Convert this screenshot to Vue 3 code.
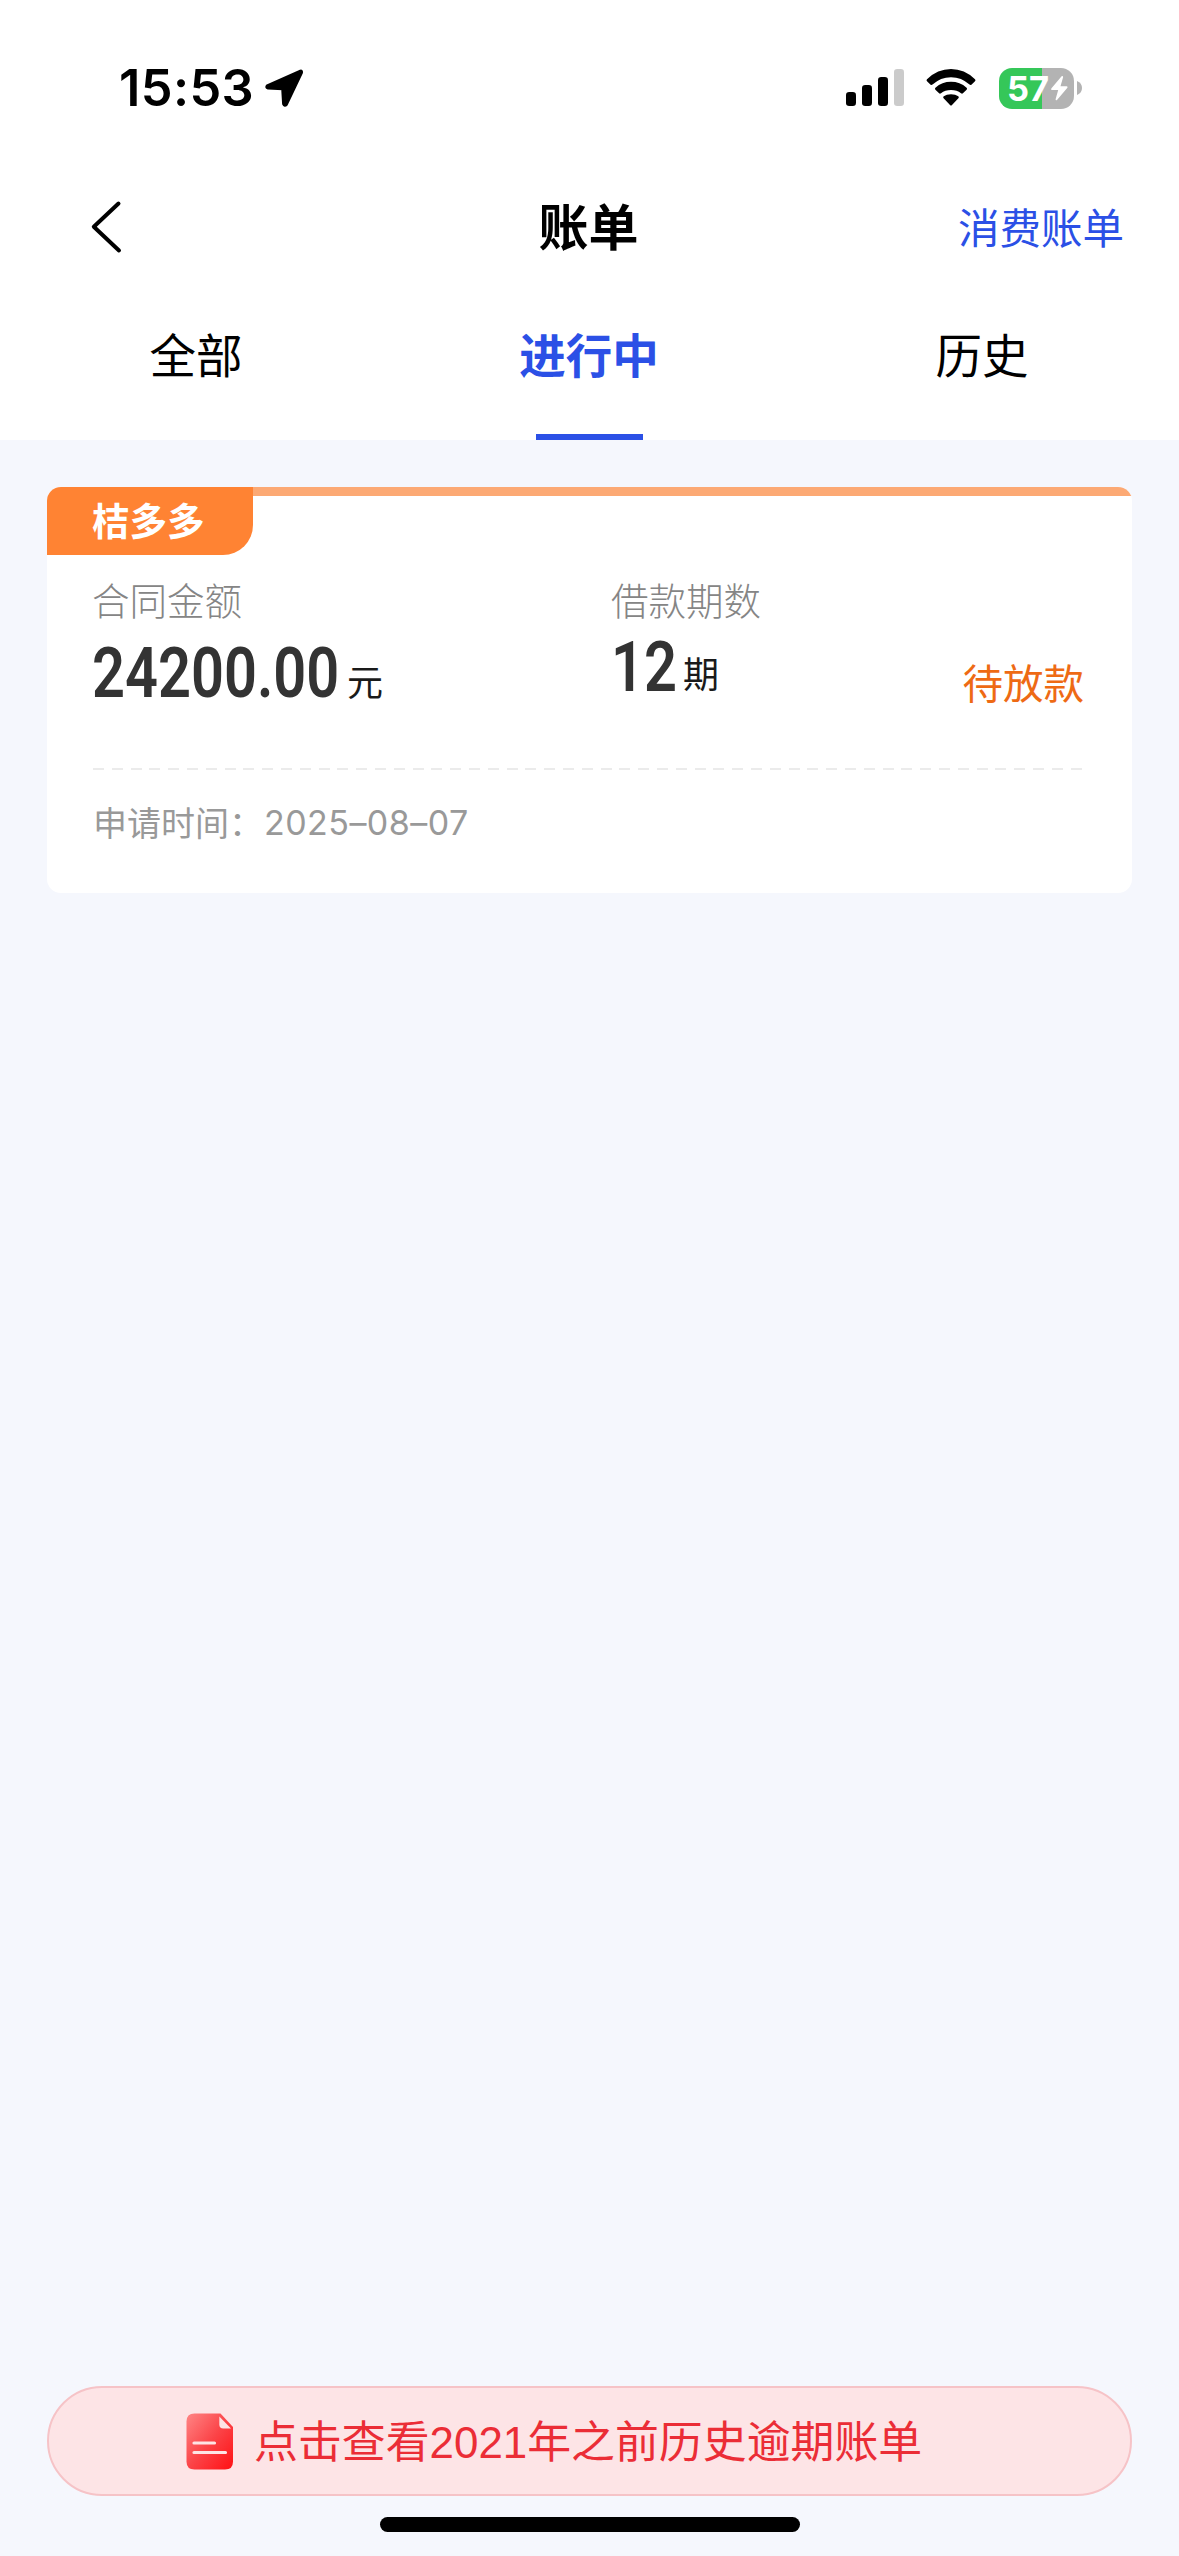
<script setup>
const tabs = [
  { label: '全部', active: false },
  { label: '进行中', active: true },
  { label: '历史', active: false },
]
const bill = {
  tag: '桔多多',
  amount: '24200.00',
  periods: '12',
  status: '待放款',
  date: '2025–08–07',
}
</script>

<template>
  <div class="page">
    <header class="top">
      <div class="status-bar">
        <span class="clock">15:53</span>
        <svg class="location" width="40" height="40" viewBox="0 0 40 40">
          <path d="M36.5 3.2 L3.3 18 Q2.2 19.6 4 20 L18.8 20.6 L19.7 36 Q20.6 38.2 22.3 36.4 L37.4 4.6 Q37.6 3 36.5 3.2Z" fill="#000" stroke="#000" stroke-width="3.2" stroke-linejoin="round" />
        </svg>
        <svg class="signal" width="58" height="38" viewBox="0 0 58 38">
          <rect x="0" y="23" width="10" height="14" rx="3.2" />
          <rect x="16" y="16" width="10" height="21" rx="3.2" />
          <rect x="32" y="8" width="10" height="29" rx="3.2" />
          <rect x="48" y="0" width="10" height="37" rx="3.2" fill="#cbcbcb" />
        </svg>
        <svg class="wifi" width="50" height="38" viewBox="0 0 50 38">
          <path d="M1 10.2 Q11.5 0 25 0 Q38.500 0 49 10.2 Q50 11.2 49 12.200 L45.400 15.700 Q44.500 16.500 43.500 15.600 Q35.500 8.200 25 8.200 Q14.500 8.200 6.500 15.600 Q5.500 16.500 4.600 15.700 L1 12.200 Q0 11.200 1 10.200Z" />
          <path d="M9.400 18.700 Q16 12.800 25 12.800 Q34 12.800 40.600 18.700 Q41.600 19.700 40.600 20.700 L36.900 24.300 Q36 25.100 35 24.200 Q31 20.900 25 20.900 Q19 20.900 15 24.200 Q14 25.100 13.100 24.300 L9.400 20.700 Q8.400 19.700 9.400 18.700Z" />
          <path d="M17.700 27.300 Q20.500 25.200 25 25.200 Q29.500 25.200 32.300 27.300 Q33.400 28.300 32.400 29.300 L26 35.900 Q25 36.900 24 35.900 L17.600 29.300 Q16.600 28.300 17.700 27.300Z" />
        </svg>
        <div class="battery">
          <div class="battery-body">
            <span class="battery-text">57</span>
            <svg width="19" height="27" viewBox="0 0 19 27">
              <path d="M11.600 1.200 L1.300 13.400 Q.5 14.900 2.100 15 H8.200 L5.600 24.200 Q5.500 25.800 7 25 L17.400 12.700 Q18.100 11.400 16.600 11.200 H10.500 L13.100 2.200 Q13.100 .3 11.600 1.200Z" fill="#fff" />
            </svg>
          </div>
          <svg class="nub" width="5" height="14" viewBox="0 0 5 14"><path d="M0 0 Q5 2 5 7 Q5 12 0 14Z" fill="#b3b3b3" /></svg>
        </div>
      </div>

      <nav class="nav">
        <svg class="back" width="32" height="54" viewBox="0 0 32 54">
          <path d="M28.500 3.500 L3.800 26.700 L29 50.500" fill="none" stroke="#000" stroke-width="4" stroke-linecap="round" stroke-linejoin="round" />
        </svg>
        <h1 class="title">账单</h1>
        <a class="link">消费账单</a>
      </nav>

      <div class="tabs">
        <div v-for="tab in tabs" :key="tab.label" class="tab" :class="{ active: tab.active }">
          <span>{{ tab.label }}</span>
        </div>
      </div>
    </header>

    <section class="card">
      <div class="card-head">
        <div class="tag">{{ bill.tag }}</div>
        <div class="stripe"></div>
      </div>
      <div class="info">
        <div class="amount-col">
          <div class="label">合同金额</div>
          <div class="value">
            <span class="number wide"><b>{{ bill.amount }}</b></span>
            <span class="unit">元</span>
          </div>
        </div>
        <div class="period-col">
          <div class="label">借款期数</div>
          <div class="value">
            <span class="number"><b>{{ bill.periods }}</b></span>
            <span class="unit">期</span>
          </div>
        </div>
        <div class="state">{{ bill.status }}</div>
      </div>
      <div class="divider"></div>
      <div class="applied"><span class="applied-label">申请时间：</span><span class="date">{{ bill.date }}</span></div>
    </section>

    <footer class="bottom">
      <div class="history">
        <svg width="48" height="57" viewBox="0 0 48 57">
          <defs>
            <linearGradient id="doc" x1="0" y1="0" x2="1" y2="1">
              <stop offset="0" stop-color="#ff8585" />
              <stop offset=".5" stop-color="#fb4448" />
              <stop offset="1" stop-color="#ff1014" />
            </linearGradient>
          </defs>
          <path d="M8.500 .5 H34.500 L47 14 V48.500 Q47 56.500 39 56.500 H8.500 Q.5 56.500 .5 48.500 V8.500 Q.5 .5 8.500 .5Z" fill="url(#doc)" />
          <path d="M33.300 3.500 L45 15.500 H37.300 Q33.300 15.500 33.300 11.500Z" fill="#fde4e5" />
          <path d="M8 30 H28.500 M8 39.500 H39.500" stroke="#fde4e5" stroke-width="3.200" stroke-linecap="round" />
        </svg>
        <span class="history-text">点击查看2021年之前历史逾期账单</span>
      </div>
      <div class="home"></div>
    </footer>
  </div>
</template>

<style>
body {
  margin: 0;
  background: #f5f7fd;
}
</style>

<style scoped>
.page {
  box-sizing: border-box;
  width: 1179px;
  height: 2556px;
  display: flex;
  flex-direction: column;
  background: #f5f7fd;
  font-family: "Noto Sans CJK SC", sans-serif;
  color: #000;
  overflow: hidden;
}
.top {
  background: #fff;
  height: 440px;
}
.status-bar {
  height: 176px;
  display: flex;
  align-items: center;
  padding-left: 119px;
}
.clock {
  width: 145px;
  font: 600 50.500px/60px Inter, sans-serif;
  letter-spacing: 0.4px;
}
.signal {
  margin-left: 542px;
}
.wifi {
  margin-left: 22px;
}
.battery {
  display: flex;
  align-items: center;
  gap: 3px;
  margin-left: 23px;
}
.battery-body {
  box-sizing: border-box;
  width: 75px;
  height: 41px;
  border-radius: 13px;
  background: linear-gradient(to right, #35c759 43px, #b3b3b3 43px);
  display: flex;
  align-items: center;
  padding-left: 8px;
}
.battery-text {
  width: 43px;
  font: 700 34.500px/41px Inter, sans-serif;
  color: #fff;
}
.nav {
  height: 96px;
  display: grid;
  grid-template-columns: 1fr 200px 1fr;
  align-items: center;
}
.back {
  margin: 5px 0 0 90px;
}
.title {
  margin: 0 2px 0 0;
  font-size: 50px;
  line-height: 60px;
  font-weight: 700;
  text-align: center;
}
.link {
  justify-self: end;
  margin: 3px 55px 0 0;
  font-size: 41.5px;
  line-height: 50px;
  color: #2b50e6;
}
.tabs {
  display: flex;
  height: 168px;
}
.tab {
  flex: 1;
  display: flex;
  flex-direction: column;
  justify-content: space-between;
  align-items: center;
  padding-top: 51px;
  font-size: 46.500px;
  line-height: 60px;
}
.tab span {
  margin-right: 1px;
}
.tab.active {
  font-weight: 700;
  color: #2b50e6;
}
.tab.active::after {
  content: "";
  width: 107px;
  height: 6px;
  background: #2b50e6;
}
.card {
  margin: 47px 47px 0 47px;
  height: 406px;
  border-radius: 14px;
  background: #fff;
  overflow: hidden;
}
.card-head {
  display: flex;
  height: 68px;
}
.tag {
  box-sizing: border-box;
  width: 206px;
  height: 68px;
  padding-left: 45px;
  border-radius: 0 0 30px 0;
  background: #ff8333;
  color: #fff;
  font-size: 37.500px;
  line-height: 64px;
  font-weight: 700;
}
.stripe {
  flex: 1;
  height: 9px;
  background: #fca974;
}
.info {
  display: flex;
  height: 213px;
  padding: 21px 0 0 45px;
  box-sizing: border-box;
}
.amount-col {
  width: 519px;
}
.label {
  font-size: 37.500px;
  line-height: 45px;
  font-weight: 300;
  color: #858585;
}
.value {
  display: flex;
  align-items: flex-end;
  height: 60px;
  margin-top: 22px;
}
.period-col .value {
  margin-top: 16px;
}
.number {
  width: 72px;
  height: 60px;
  color: #333;
  white-space: nowrap;
}
.number.wide {
  width: 255px;
}
.number b {
  display: inline-block;
  font: 600 70px/60px Roboto, sans-serif;
  transform: scaleX(0.825);
  transform-origin: left center;
}
.unit {
  font-size: 36px;
  line-height: 40px;
  margin-bottom: 3px;
  color: #1a1a1a;
}
.period-col .unit {
  margin-bottom: 5px;
}
.state {
  margin: 81px 0 0 auto;
  padding-right: 48px;
  font-size: 40.500px;
  line-height: 50px;
  color: #ee6a14;
}
.divider {
  height: 2px;
  margin: 0 45px 1px 46px;
  background: repeating-linear-gradient(to right, #ebebeb 0 11px, transparent 11px 18.800px);
}
.applied {
  display: flex;
  align-items: center;
  height: 50px;
  margin: 26px 0 0 46px;
  color: #999;
}
.applied-label {
  width: 171px;
  font-size: 34px;
  white-space: nowrap;
}
.date {
  font: 400 34px/50px Inter, sans-serif;
  letter-spacing: 0.45px;
  padding-top: 4px;
}
.bottom {
  margin-top: auto;
  padding: 0 47px 24px 47px;
}
.history {
  box-sizing: border-box;
  height: 110px;
  border: 2px solid #f6c3c7;
  border-radius: 55px;
  background: #fde4e6;
  display: flex;
  align-items: center;
  padding-left: 137px;
}
.history-text {
  margin: 3px 0 0 20px;
  font: 400 43.900px/60px "Liberation Sans", "Noto Sans CJK SC", sans-serif;
  color: #eb2d36;
  white-space: nowrap;
}
.home {
  width: 420px;
  height: 15px;
  margin: 21px auto 0;
  border-radius: 8px;
  background: #000;
}
</style>
